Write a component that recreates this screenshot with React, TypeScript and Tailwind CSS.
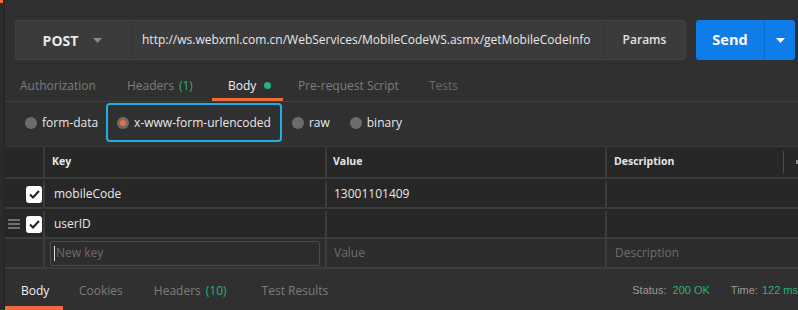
import React from "react";

const FONT = { fontFamily: '"Open Sans", "Noto Sans", sans-serif' };

function Caret({ className }: { className?: string }) {
  return (
    <svg width="9" height="5" viewBox="0 0 9 5" className={className}>
      <path d="M0 0 L9 0 L4.5 5 Z" fill="currentColor" />
    </svg>
  );
}

function Radio({ checked }: { checked?: boolean }) {
  return (
    <span className="w-[12px] h-[12px] rounded-full bg-[#6c6c6c] flex items-center justify-center shrink-0">
      {checked && <span className="w-[6px] h-[6px] rounded-full bg-[#f26b3a]" />}
    </span>
  );
}

function Check() {
  return (
    <span className="w-[16px] h-[17px] rounded-[3px] bg-white flex items-center justify-center">
      <svg width="11" height="9" viewBox="0 0 11 9">
        <path d="M1 4.5 L4 7.5 L10 1" fill="none" stroke="#222" strokeWidth="2" />
      </svg>
    </span>
  );
}

function Handle() {
  return (
    <svg width="12" height="10" viewBox="0 0 12 10">
      <path d="M0 1 H12 M0 5 H12 M0 9 H12" stroke="#8a8a8a" strokeWidth="1.5" />
    </svg>
  );
}

export default function App() {
  return (
    <div className="w-[798px] h-[310px] bg-[#303030] flex overflow-hidden" style={FONT}>
      {/* edge of sidebar */}
      <div className="w-[5px] flex flex-col border-r border-[#242424] bg-[#2b2b2b]">
        <div className="h-[3px] w-[3px] bg-[#f26b3a]" />
      </div>

      <div className="flex-1 min-w-0 flex flex-col">
        {/* request bar */}
        <div className="flex mt-[20px] ml-[10px] mr-[3px] h-[40px]">
          <div className="flex flex-1 min-w-0 rounded-[3px] bg-[#3b3b3b] border border-[#434343]">
            <div className="w-[116px] flex items-center justify-center gap-[15px] border-r border-[#333] text-[#e8e8e8] font-bold text-[14px]">
              <span className="ml-[-2px]">POST</span>
              <Caret className="text-[#8a8a8a]" />
            </div>
            <div className="flex-1 min-w-0 flex items-center pl-[10px] border-r border-[#333] text-[#e8e8e8] text-[12px] whitespace-nowrap overflow-hidden">
              http://ws.webxml.com.cn/WebServices/MobileCodeWS.asmx/getMobileCodeInfo
            </div>
            <div className="w-[81px] flex items-center justify-center text-[#e2e2e2] text-[12px] font-semibold">
              Params
            </div>
          </div>
          <div className="ml-[10px] w-[99px] shrink-0 flex rounded-[3px] bg-[#0f7de9]">
            <div className="w-[69px] flex items-center justify-center text-white font-bold text-[14.5px] border-r border-[#0b6fd2]">
              Send
            </div>
            <div className="flex-1 flex items-center justify-center text-white">
              <Caret />
            </div>
          </div>
        </div>

        {/* request tabs */}
        <div className="flex h-[32px] mt-[10px] border-b border-[#3f3f3f] text-[12px]">
          <div className="w-[106px] pl-[15px] flex items-center text-[#7d7d7d]">Authorization</div>
          <div className="w-[101px] pl-[16px] flex items-center text-[#7d7d7d]">
            Headers <span className="ml-[5px] text-[#2ab27b]">(1)</span>
          </div>
          <div className="w-[71px] pl-[16px] flex items-center text-[#f0f0f0] border-b-[3px] border-[#f26b3a] pt-[3px]">
            Body
            <span className="ml-[8px] w-[7px] h-[7px] rounded-full bg-[#2ab27b]" />
          </div>
          <div className="w-[130px] pl-[15px] flex items-center text-[#7d7d7d]">Pre-request Script</div>
          <div className="pl-[16px] flex items-center text-[#6a6a6a]">Tests</div>
        </div>

        {/* body modes */}
        <div className="flex items-center h-[44px] text-[12px] text-[#e8e8e8] pb-[3px]">
          <div className="flex items-center gap-[5px] ml-[20px]">
            <Radio />
            <span>form-data</span>
          </div>
          <div className="flex items-center gap-[5px] ml-[8px] h-[39px] px-[9px] rounded-[4px] border-2 border-[#1cb0e4]">
            <Radio checked />
            <span>x-www-form-urlencoded</span>
          </div>
          <div className="flex items-center gap-[5px] ml-[10px]">
            <Radio />
            <span>raw</span>
          </div>
          <div className="flex items-center gap-[5px] ml-[20px]">
            <Radio />
            <span>binary</span>
          </div>
        </div>

        {/* key/value table */}
        <div className="flex flex-col bg-[#272727] border-t border-[#3a3a3a] text-[12px] text-[#e8e8e8]">
          <div className="flex h-[32px] border-b-2 border-[#3c3c3c] text-[10.5px] font-bold text-[#e6e6e6]">
            <div className="w-[40px] border-r-2 border-[#3c3c3c]" />
            <div className="w-[282px] flex items-center pl-[7px] border-r-2 border-[#3c3c3c]">Key</div>
            <div className="w-[280px] flex items-center pl-[6px] border-r-2 border-[#3c3c3c]">Value</div>
            <div className="flex-1 flex items-center pl-[7px]">
              <span className="flex-1">Description</span>
              <span className="w-px h-[22px] bg-[#4a4a4a]" />
              <span className="ml-[12px] mr-[-3px] w-[5px] h-[4px] bg-[#8a8a8a]" />
            </div>
          </div>
          <div className="flex h-[30px] border-b-2 border-[#3c3c3c] pt-[2px]">
            <div className="w-[40px] flex items-center justify-end pr-[1px] border-r-2 border-[#3c3c3c]">
              <Check />
            </div>
            <div className="w-[282px] flex items-center pl-[9px] border-r-2 border-[#3c3c3c]">mobileCode</div>
            <div className="w-[280px] flex items-center pl-[7px] border-r-2 border-[#3c3c3c]">13001101409</div>
            <div className="flex-1" />
          </div>
          <div className="flex h-[30px] border-b-2 border-[#3c3c3c] pt-[2px]">
            <div className="w-[40px] flex items-center justify-between pl-[3px] pr-[1px] border-r-2 border-[#3c3c3c]">
              <Handle />
              <Check />
            </div>
            <div className="w-[282px] flex items-center pl-[9px] border-r-2 border-[#3c3c3c]">userID</div>
            <div className="w-[280px] border-r-2 border-[#3c3c3c]" />
            <div className="flex-1" />
          </div>
          <div className="flex h-[30px] bg-[#2d2d2d] border-b-2 border-[#3c3c3c] text-[#6c6c6c]">
            <div className="w-[40px] border-r-2 border-[#3c3c3c]" />
            <div className="w-[282px] flex items-center px-[5px] border-r-2 border-[#3c3c3c]">
              <div className="flex-1 h-[25px] flex items-center border border-[#4a4a4a] rounded-[2px] pl-[3px]">
                <span className="w-px h-[15px] bg-[#dcdcdc] mr-[1px]" />
                New key
              </div>
            </div>
            <div className="w-[280px] flex items-center pl-[7px] border-r-2 border-[#3c3c3c]">Value</div>
            <div className="flex-1 flex items-center pl-[8px]">Description</div>
          </div>
        </div>

        {/* response bar */}
        <div className="flex-1 flex items-stretch text-[12px]">
          <div className="w-[58px] pl-[16px] flex items-center text-[#f0f0f0] border-b-4 border-[#f26b3a] pt-[6px]">Body</div>
          <div className="ml-[16px] flex items-center text-[#7d7d7d] pt-[2px]">Cookies</div>
          <div className="ml-[31px] flex items-center text-[#7d7d7d] pt-[2px]">
            Headers <span className="ml-[5px] text-[#2ab27b]">(10)</span>
          </div>
          <div className="ml-[35px] flex items-center text-[#7d7d7d] pt-[2px]">Test Results</div>
          <div
            className="ml-auto flex items-center text-[11px] text-[#9a9a9a] pt-[2px]"
            style={{ fontFamily: '"Liberation Sans", Arial, sans-serif' }}
          >
            Status:<span className="ml-[6px] text-[#2ab27b]">200 OK</span>
            <span className="ml-[21px]">Time:</span>
            <span className="ml-[4px] text-[#2ab27b]">122 ms</span>
          </div>
        </div>
      </div>
    </div>
  );
}
